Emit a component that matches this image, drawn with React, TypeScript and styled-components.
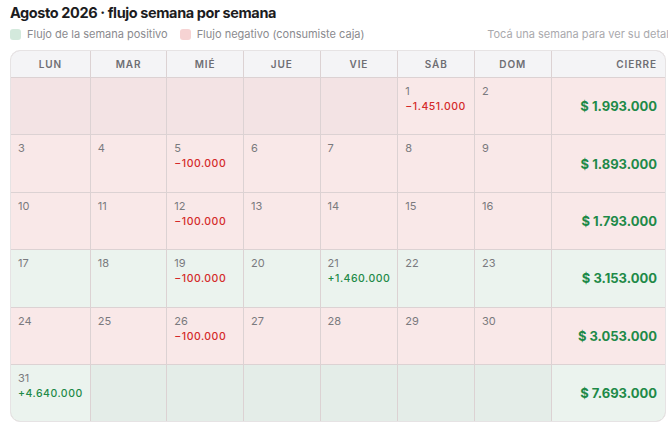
import React from "react";
import styled, { createGlobalStyle } from "styled-components";

const Global = createGlobalStyle`
  html, body { margin: 0; padding: 0; overflow: hidden; background: #ffffff; }
  body { font-family: Inter, "Noto Sans", "Liberation Sans", sans-serif; -webkit-font-smoothing: antialiased; }
`;

const Page = styled.div`
  padding: 3px 2px 0 10px;
  width: 656px;
`;

const Title = styled.h1`
  margin: 0;
  font-size: 14.5px;
  font-weight: 700;
  color: #1c1c1e;
  line-height: 19px;
  letter-spacing: -0.4px;
`;

const Legend = styled.div`
  display: flex;
  align-items: center;
  gap: 12px;
  margin: 4px -12px 0 0;
  height: 16px;
  white-space: nowrap;
`;

const LegendItem = styled.div`
  display: flex;
  align-items: center;
  gap: 6px;
  font-size: 11px;
  color: #8a8a8e;
`;

const Swatch = styled.span<{ $tone: "pos" | "neg" }>`
  width: 11px;
  height: 11px;
  border-radius: 3px;
  background: ${(p) => (p.$tone === "pos" ? "#d3e9dc" : "#f6d3d3")};
`;

const Hint = styled.div`
  margin-left: auto;
  font-size: 11px;
  color: #a9a9ad;
  flex-shrink: 0;
`;

const Table = styled.div`
  margin-top: 8px;
  display: grid;
  grid-template-columns: repeat(7, 1fr) 1.5fr;
  grid-template-rows: 26px repeat(6, 56.4px);
  border: 1px solid #e6e3e4;
  border-radius: 10px;
  overflow: hidden;
  background: #dcd2d3;
  gap: 1px;
`;

const Head = styled.div<{ $right?: boolean }>`
  background: #f4f4f6;
  display: flex;
  align-items: center;
  justify-content: ${(p) => (p.$right ? "flex-end" : "center")};
  padding-right: ${(p) => (p.$right ? "8px" : "0")};
  font-size: 10px;
  font-weight: 600;
  letter-spacing: 0.9px;
  color: #6e6e73;
`;

type Tone = "pos" | "neg";

const bg = (tone: Tone, empty: boolean) =>
  tone === "pos" ? (empty ? "#e4ede8" : "#ebf3ee") : empty ? "#f3e3e4" : "#f9e8e8";

const Cell = styled.div<{ $tone: Tone; $empty?: boolean }>`
  background: ${(p) => bg(p.$tone, !!p.$empty)};
  padding: 7px 7px;
  display: flex;
  flex-direction: column;
  gap: 2px;
`;

const DayNum = styled.span`
  font-size: 11px;
  color: #7a7a7e;
  line-height: 13px;
`;

const Amount = styled.span<{ $tone: Tone }>`
  font-size: 10.5px;
  font-weight: 500;
  letter-spacing: 0.5px;
  line-height: 13px;
  color: ${(p) => (p.$tone === "pos" ? "#1e8a48" : "#d42a2a")};
`;

const Close = styled.div<{ $tone: Tone }>`
  background: ${(p) => bg(p.$tone, false)};
  display: flex;
  align-items: center;
  justify-content: flex-end;
  padding-right: 8px;
  font-size: 13px;
  font-weight: 700;
  letter-spacing: 0;
  color: #1e8a48;
`;

type Day = { d?: number; amt?: string; amtTone?: Tone };
type Week = { tone: Tone; days: Day[]; close: string };

const weeks: Week[] = [
  {
    tone: "neg",
    days: [{}, {}, {}, {}, {}, { d: 1, amt: "−1.451.000", amtTone: "neg" }, { d: 2 }],
    close: "$ 1.993.000",
  },
  {
    tone: "neg",
    days: [{ d: 3 }, { d: 4 }, { d: 5, amt: "−100.000", amtTone: "neg" }, { d: 6 }, { d: 7 }, { d: 8 }, { d: 9 }],
    close: "$ 1.893.000",
  },
  {
    tone: "neg",
    days: [{ d: 10 }, { d: 11 }, { d: 12, amt: "−100.000", amtTone: "neg" }, { d: 13 }, { d: 14 }, { d: 15 }, { d: 16 }],
    close: "$ 1.793.000",
  },
  {
    tone: "pos",
    days: [
      { d: 17 },
      { d: 18 },
      { d: 19, amt: "−100.000", amtTone: "neg" },
      { d: 20 },
      { d: 21, amt: "+1.460.000", amtTone: "pos" },
      { d: 22 },
      { d: 23 },
    ],
    close: "$ 3.153.000",
  },
  {
    tone: "neg",
    days: [{ d: 24 }, { d: 25 }, { d: 26, amt: "−100.000", amtTone: "neg" }, { d: 27 }, { d: 28 }, { d: 29 }, { d: 30 }],
    close: "$ 3.053.000",
  },
  {
    tone: "pos",
    days: [{ d: 31, amt: "+4.640.000", amtTone: "pos" }, {}, {}, {}, {}, {}, {}],
    close: "$ 7.693.000",
  },
];

const heads = ["LUN", "MAR", "MIÉ", "JUE", "VIE", "SÁB", "DOM"];

export default function App() {
  return (
    <>
      <Global />
      <Page>
        <Title>Agosto 2026 · flujo semana por semana</Title>
        <Legend>
          <LegendItem>
            <Swatch $tone="pos" />
            Flujo de la semana positivo
          </LegendItem>
          <LegendItem>
            <Swatch $tone="neg" />
            Flujo negativo (consumiste caja)
          </LegendItem>
          <Hint>Tocá una semana para ver su detalle</Hint>
        </Legend>
        <Table>
          {heads.map((h) => (
            <Head key={h}>{h}</Head>
          ))}
          <Head $right>CIERRE</Head>
          {weeks.map((w, wi) => (
            <React.Fragment key={wi}>
              {w.days.map((day, di) => (
                <Cell key={di} $tone={w.tone} $empty={day.d === undefined}>
                  {day.d !== undefined && <DayNum>{day.d}</DayNum>}
                  {day.amt && <Amount $tone={day.amtTone!}>{day.amt}</Amount>}
                </Cell>
              ))}
              <Close $tone={w.tone}>{w.close}</Close>
            </React.Fragment>
          ))}
        </Table>
      </Page>
    </>
  );
}
